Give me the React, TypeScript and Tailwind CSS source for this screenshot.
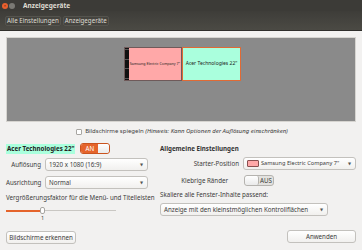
import React from "react";

function Toggle({ on }: { on: boolean }) {
  return on ? (
    <div className="flex h-[11px] w-[30px] overflow-hidden rounded-[3px] border border-[#c9541f]">
      <div className="flex w-[17px] items-center justify-center bg-[#e5642b] text-[6.2px] text-white">AN</div>
      <div className="flex-1 rounded-[2px] bg-gradient-to-b from-white to-[#eaeaea]" />
    </div>
  ) : (
    <div className="flex h-[11px] w-[30px] overflow-hidden rounded-[3px] border border-[#b5b3af] bg-[#e3e2df]">
      <div className="w-[14px] rounded-[2px] border-r border-[#b5b3af] bg-gradient-to-b from-white to-[#eaeaea]" />
      <div className="flex flex-1 items-center justify-center text-[6.2px] text-[#3c3c3c]">AUS</div>
    </div>
  );
}

function Combo({ children, className = "" }: { children: React.ReactNode; className?: string }) {
  return (
    <div
      className={`flex h-[13px] items-center justify-between rounded-[3px] border border-[#c3c1bd] bg-gradient-to-b from-white to-[#f1f0ee] pl-[3px] pr-[4px] text-[6.2px] text-[#3c3c3c] ${className}`}
    >
      <div className="flex items-center gap-[2px] whitespace-nowrap">{children}</div>
      <span className="ml-[2px] text-[4px] text-[#555]">▼</span>
    </div>
  );
}

function Button({ children, className = "" }: { children: React.ReactNode; className?: string }) {
  return (
    <div
      className={`flex h-[13px] items-center justify-center rounded-[3px] border border-[#c3c1bd] bg-gradient-to-b from-white to-[#f1f0ee] text-[6.2px] text-[#3c3c3c] ${className}`}
    >
      {children}
    </div>
  );
}

export default function App() {
  return (
    <div
      className="flex h-[250px] w-[362px] flex-col overflow-hidden bg-[#f2f1f0] text-[#3c3c3c]"
      style={{ fontFamily: '"Noto Sans", "DejaVu Sans", sans-serif' }}
    >
      {/* title bar */}
      <div className="flex h-[11px] items-center bg-[#3c3b37] pl-[2px]">
        <div className="flex items-center gap-[1px]">
          <div className="flex h-[6px] w-[6px] items-center justify-center rounded-full bg-[#e9602e] text-[4px] leading-none text-[#3a1a0e]">×</div>
          <div className="h-[6px] w-[6px] rounded-full bg-[#7a7974]" />
        </div>
        <div className="ml-[8px] text-[6.5px] font-bold text-[#dfdbd2]">Anzeigegeräte</div>
      </div>
      {/* toolbar */}
      <div className="flex h-[20px] items-center gap-[2px] border-b border-[#2f2e2b] bg-gradient-to-b from-[#3e3d39] to-[#4b4a44] px-[5px]">
        <div className="flex h-[10px] items-center rounded-[2px] border border-[#55544e] bg-[#45443f] px-[1px] text-[6.2px] text-[#dfdbd2]">Alle Einstellungen</div>
        <div className="flex h-[10px] items-center rounded-[2px] border border-[#55544e] bg-[#45443f] px-[1px] text-[6.2px] text-[#dfdbd2]">Anzeigegeräte</div>
      </div>

      <div className="flex flex-1 flex-col px-[6px] pt-[6px]">
        {/* monitor arrangement */}
        <div className="flex h-[85px] justify-center border border-[#d6d4d0] bg-[#8a8a8a] pl-[3px] pt-[9px]">
          <div className="flex h-[34px]">
            <div className="flex w-[58px] border border-[#6f5a5a] bg-[#ffa8a8]">
              <div className="flex w-[4px] flex-col justify-between bg-[#111] py-[1px]">
                <div className="h-[1px] bg-[#555]" />
                <div className="h-[1px] bg-[#555]" />
                <div className="h-[1px] bg-[#555]" />
                <div className="h-[1px] bg-[#555]" />
              </div>
              <div className="flex flex-1 items-center justify-end overflow-hidden whitespace-nowrap pr-[1px] text-[3.6px] text-[#222]">
                Samsung Electric Company 7"
              </div>
            </div>
            <div className="flex w-[59px] items-center justify-center border border-[#e06a35] bg-[#aaffdd] text-[5px] text-[#222]">
              Acer Technologies 22"
            </div>
          </div>
        </div>

        {/* mirror checkbox */}
        <div className="mt-[5px] flex items-center justify-center gap-[3px] pl-[2px] text-[6px]">
          <div className="h-[6px] w-[6px] rounded-[1px] border border-[#a8a6a2] bg-white" />
          <span>
            Bildschirme spiegeln <i>(Hinweis: Kann Optionen der Auflösung einschränken)</i>
          </span>
        </div>

        {/* settings */}
        <div className="mt-[6px] grid grid-cols-[154px_1fr] text-[6.2px]">
          <div className="flex flex-col">
            <div className="flex items-center gap-[5px] pt-[1px]">
              <div className="bg-[#aaffdd] px-[1px] font-bold leading-[10px] text-[#222]">Acer Technologies 22"</div>
              <Toggle on />
            </div>
            <div className="mt-[4px] flex items-center">
              <div className="w-[35px] text-right">Auflösung</div>
              <Combo className="ml-[4px] w-[103px]">1920 x 1080 (16:9)</Combo>
            </div>
            <div className="mt-[5px] flex items-center">
              <div className="w-[35px] text-right">Ausrichtung</div>
              <Combo className="ml-[4px] w-[103px]">Normal</Combo>
            </div>
            <div className="mt-[4px] whitespace-nowrap">Vergrößerungsfaktor für die Menü- und Titelleisten</div>
            <div className="relative mt-[6px] h-[5px] w-[110px]">
              <div className="absolute left-0 right-0 top-[2px] h-[1px] bg-[#c9c7c3]" />
              <div className="absolute left-0 top-[1.5px] h-[2px] w-[36px] bg-[#e5642b]" />
              <div className="absolute left-[34px] top-[-1px] h-[7px] w-[5px] rounded-[2px] border border-[#a8a6a2] bg-white" />
            </div>
            <div className="ml-[35px] mt-[2px] text-[5.5px] leading-[7px]">1</div>
            <Button className="mt-[9px] w-[70px]">Bildschirme erkennen</Button>
          </div>

          <div className="flex flex-col">
            <div className="pt-[2px] font-bold leading-[10px] text-[#333]">Allgemeine Einstellungen</div>
            <div className="mt-[3px] flex items-center">
              <div className="w-[79px] text-right">Starter-Position</div>
              <Combo className="ml-[4px] w-[113px] pr-[3px]">
                <span className="h-[7px] w-[12px] shrink-0 rounded-[1px] border border-[#8a5050] bg-[#ffa8a8]" />
                <span className="text-[5.6px]">Samsung Electric Company 7"</span>
              </Combo>
            </div>
            <div className="mt-[5px] flex items-center">
              <div className="w-[68px] text-right">Klebrige Ränder</div>
              <div className="ml-[16px]">
                <Toggle on={false} />
              </div>
            </div>
            <div className="mt-[4px] whitespace-nowrap">Skaliere alle Fenster-Inhalte passend:</div>
            <Combo className="mt-[4px] w-[168px]">Anzeige mit den kleinstmöglichen Kontrollflächen</Combo>
            <Button className="ml-[127px] mt-[14px] w-[69px]">Anwenden</Button>
          </div>
        </div>
      </div>
    </div>
  );
}
